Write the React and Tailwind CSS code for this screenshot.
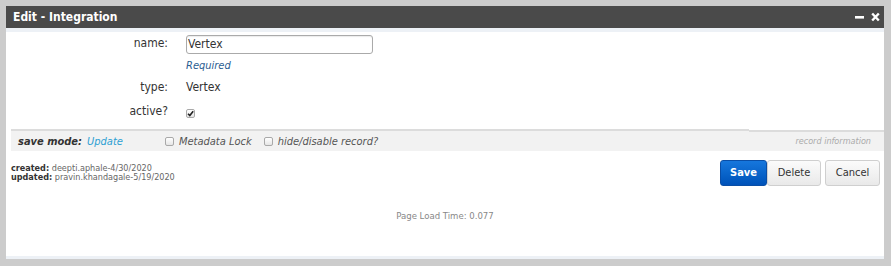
const Check = ({ checked }) => (
  <span className="inline-flex items-center justify-center w-[9px] h-[9px] border border-[#a9a9a9] rounded-[2px] bg-gradient-to-b from-[#ffffff] to-[#e6e6e6]">
    {checked && (
      <svg width="7" height="7" viewBox="0 0 7 7">
        <path d="M1 3.8 L2.8 5.6 L6.2 1.2" stroke="#222" strokeWidth="1.6" fill="none" />
      </svg>
    )}
  </span>
);

const App = () => {
  return (
    <div className="w-[891px] h-[266px] bg-[#cccccc] pt-[6px] pl-[6px] pr-[7px] font-['DejaVu_Sans_Condensed','DejaVu_Sans',sans-serif] text-[#333]">
      <div className="w-[878px] h-[253px] bg-white flex flex-col">
        {/* title bar */}
        <div className="h-[22px] bg-[#4a4a4a] flex items-center justify-between pl-[7px] pr-[4px]">
          <h3 className="text-white font-bold text-[12px] leading-[14px]">Edit - Integration</h3>
          <div className="flex items-center gap-[6px]">
            <svg width="10" height="10" viewBox="0 0 10 10">
              <rect x="0" y="4" width="9" height="2.6" fill="#fff" />
            </svg>
            <svg width="9" height="10" viewBox="0 0 9 10">
              <path d="M1.2 1.5 L7.8 8.5 M7.8 1.5 L1.2 8.5" stroke="#fff" strokeWidth="2.4" />
            </svg>
          </div>
        </div>
        <div className="h-[4px] bg-[#edf1f6]" />

        {/* form */}
        <div className="pl-[5px] pt-[3px]">
          <div className="grid grid-cols-[157px_1fr] gap-x-[18px] text-[12px]">
            <span className="text-right leading-[14px] pt-[1px]">name:</span>
            <div className="w-[187px] h-[19px] border border-[#aaa] rounded-[3px] px-[1px] leading-[17px] text-[#333] shadow-[inset_0_1px_1px_rgba(0,0,0,0.08)]">Vertex</div>

            <span />
            <span className="mt-[5px] italic text-[11px] leading-[13px] text-[#2b5d91]">Required</span>

            <span className="mt-[8px] text-right leading-[14px]">type:</span>
            <span className="mt-[8px] leading-[14px]">Vertex</span>

            <span className="mt-[10px] text-right leading-[14px]">active?</span>
            <div className="mt-[10px] h-[14px] flex items-end">
              <Check checked />
            </div>
          </div>
        </div>

        {/* save bar */}
        <div className="mt-[11px] ml-[5px] flex h-[22px]">
          <div className="flex-1 border-t-2 border-[#dcdcdc] bg-[#f2f2f2] flex items-center pl-[7px] text-[11px] italic leading-[13px]">
            <span className="font-bold text-[#333]">save mode:</span>
            <span className="ml-[5px] text-[#2d9fd3]">Update</span>
            <span className="ml-[42px] flex items-center gap-[5px] text-[#555]">
              <Check />
              <span>Metadata Lock</span>
            </span>
            <span className="ml-[12px] flex items-center gap-[5px] text-[#555]">
              <Check />
              <span>hide/disable record?</span>
            </span>
          </div>
          <div className="w-[135px] mt-[1px] border-t-2 border-[#dcdcdc] bg-[#f2f2f2] flex items-center justify-end pr-[13px] text-[9px] italic text-[#aaa]">
            record information
          </div>
        </div>

        {/* record info + buttons */}
        <div className="flex justify-between pl-[5px] pr-[4px]">
          <div className="pt-[13px] text-[9px] leading-[9px]">
            <p><span className="font-bold text-[#333]">created:</span> <span className="text-[#666]">deepti.aphale-4/30/2020</span></p>
            <p><span className="font-bold text-[#333]">updated:</span> <span className="text-[#666]">pravin.khandagale-5/19/2020</span></p>
          </div>
          <div className="pt-[9px] flex text-[11px]">
            <button className="w-[47px] h-[26px] rounded-[3px] border border-[#0a4ea6] bg-gradient-to-b from-[#1677dd] to-[#0052b9] text-white font-bold">Save</button>
            <button className="w-[54px] h-[26px] rounded-[3px] border border-[#cfcfcf] bg-gradient-to-b from-[#fbfbfb] to-[#e9e9e9] text-[#333]">Delete</button>
            <button className="ml-[4px] w-[55px] h-[26px] rounded-[3px] border border-[#cfcfcf] bg-gradient-to-b from-[#fbfbfb] to-[#e9e9e9] text-[#333]">Cancel</button>
          </div>
        </div>

        <p className="mt-[24px] text-center text-[9.5px] leading-[12px] text-[#888]">Page Load Time: 0.077</p>

        <div className="mt-auto h-[3px] bg-[#edf1f6]" />
      </div>
    </div>
  );
};

export default App;
